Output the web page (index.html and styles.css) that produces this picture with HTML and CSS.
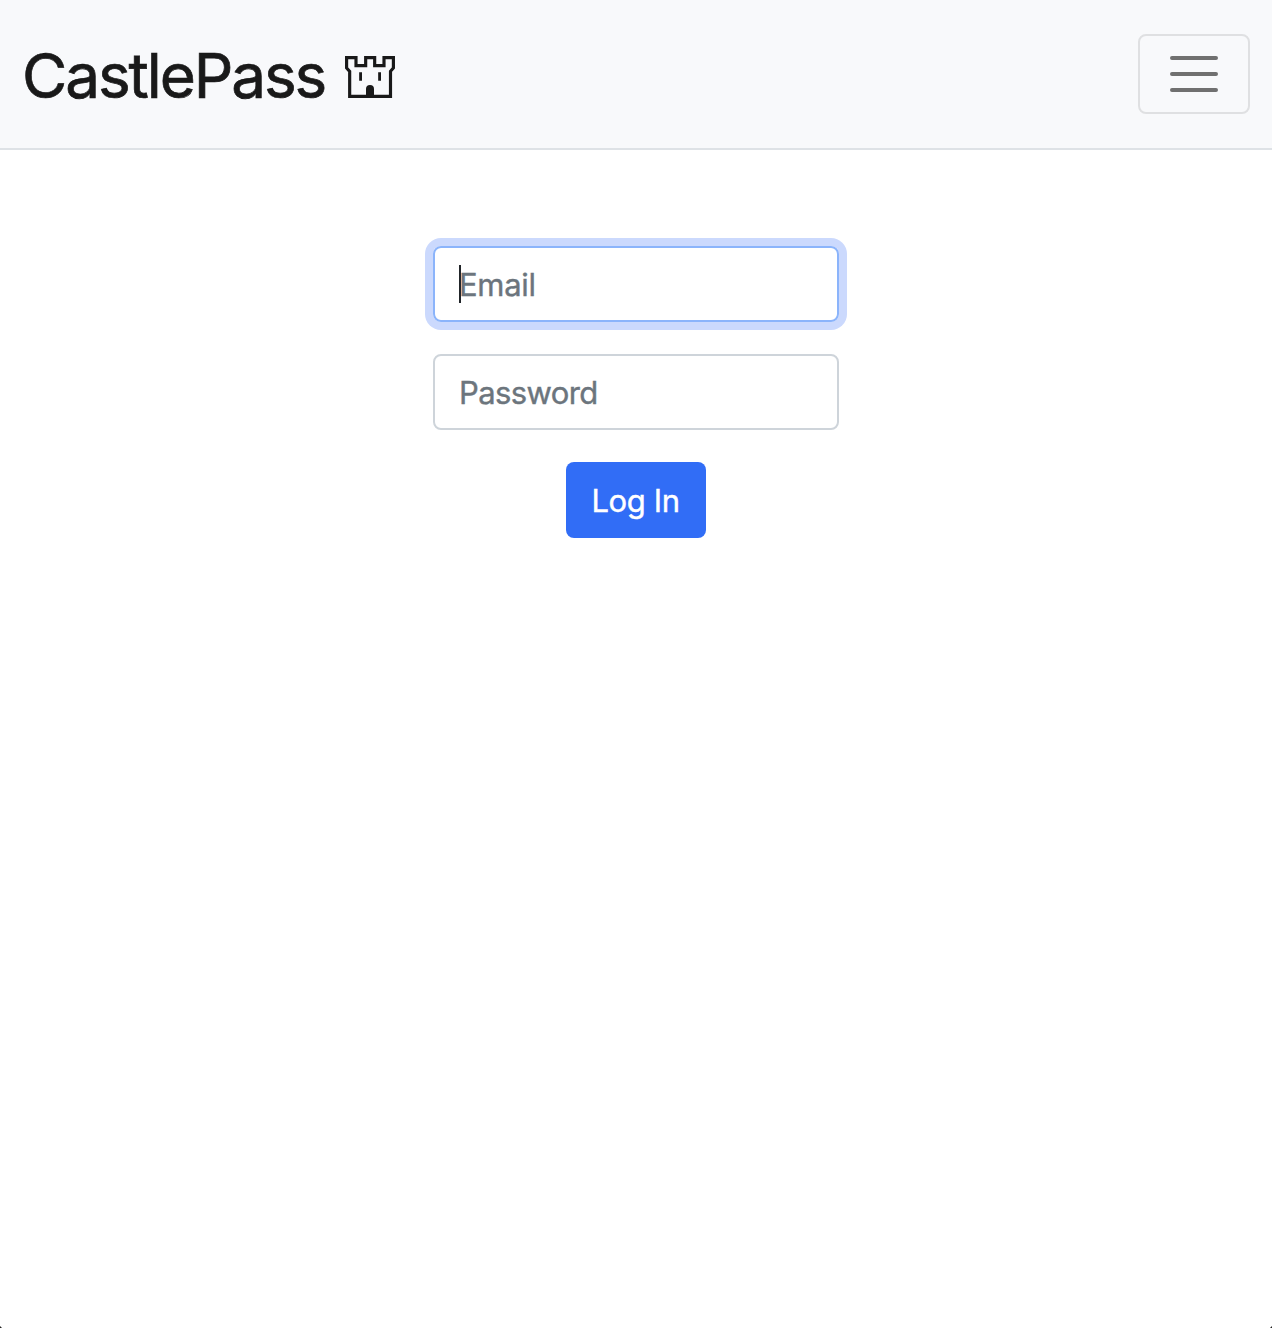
FILE: index.html
```html
<!DOCTYPE html>
<html lang="en">
<head>
<meta charset="utf-8">
<title>CastlePass</title>
<link rel="stylesheet" href="styles.css">
</head>
<body>
<nav class="navbar">
  <a class="brand">
    <span class="brand-name">CastlePass</span>
    <svg class="brand-icon" viewBox="30 33 150 126" aria-hidden="true">
      <path class="wall" d="M34.8 37.8H63V62H92V37.8H119V62H147V37.8H175.2V69L166.5 79V154.2H44V79L34.8 69Z"/>
      <path class="detail" d="M72.5 82h8.5v25h-8.5zM129.5 82h8.5v25h-8.5zM93 155V132a12 12 0 0 1 24 0V155z"/>
    </svg>
  </a>
  <button class="toggler" type="button" aria-label="Toggle navigation">
    <svg class="toggler-icon" viewBox="0 0 30 30" aria-hidden="true">
      <path d="M4 7h22M4 15h22M4 23h22"/>
    </svg>
  </button>
</nav>
<main class="content">
  <form class="login">
    <div class="field focused"><span class="caret"></span><span class="label">Email</span></div>
    <div class="field"><span class="label">Password</span></div>
    <button class="submit" type="button"><span class="submit-text">Log In</span></button>
  </form>
</main>
<span class="corner left"></span>
<span class="corner right"></span>
</body>
</html>
```
FILE: styles.css
```css
* { box-sizing: border-box; }
body {
  margin: 0;
  min-height: 1328px;
  position: relative;
  background: #fff;
  color: #212529;
  font-family: Inter, "Liberation Sans", sans-serif;
}
.navbar {
  display: flex;
  align-items: center;
  justify-content: space-between;
  height: 150px;
  padding: 0 22px 0 22px;
  background: #f8f9fb;
  border-bottom: 2px solid #dee2e6;
}
.brand { display: flex; align-items: center; color: #191919; }
.brand-name {
  width: 323px;
  padding-top: 3px;
  font-size: 62px;
  line-height: 96px;
  letter-spacing: -2.1px;
  -webkit-text-stroke: 0.7px currentColor;
  white-space: nowrap;
}
.brand-icon { width: 50px; height: 42px; margin-top: 5px; }
.wall { fill: none; stroke: #191919; stroke-width: 9.5; }
.detail { fill: #191919; }
.toggler {
  display: flex;
  align-items: center;
  justify-content: center;
  width: 112px;
  height: 80px;
  padding: 0;
  background: transparent;
  border: 2px solid #dfe0e2;
  border-radius: 8px;
}
.toggler-icon { width: 60px; height: 60px; }
.toggler-icon path {
  fill: none;
  stroke: #707070;
  stroke-width: 2;
  stroke-linecap: round;
}
.content { display: flex; justify-content: center; padding-top: 96px; }
.login {
  display: flex;
  flex-direction: column;
  align-items: center;
  gap: 32px;
  width: 406px;
}
.field {
  display: flex;
  align-items: center;
  width: 100%;
  height: 76px;
  padding-left: 24px;
  border: 2px solid #ced4da;
  border-radius: 8px;
  color: #6c757d;
  font-size: 31px;
}
.focused { border-color: #8bb4fb; box-shadow: 0 0 0 8px #cbd9fd; }
.caret { width: 2px; height: 38px; margin: -1px -2px 0 0; background: #212529; }
.label { letter-spacing: -0.6px; -webkit-text-stroke: 0.4px currentColor; }
.focused .label { letter-spacing: -0.3px; }
.submit {
  width: 140px;
  height: 76px;
  padding: 0 1px 0 0;
  border: 0;
  border-radius: 8px;
  background: #316df6;
  color: #fff;
  font: 31px Inter, "Liberation Sans", sans-serif;
}
.submit-text { letter-spacing: -0.4px; -webkit-text-stroke: 0.4px currentColor; }
.corner { position: absolute; bottom: 0; width: 2px; height: 2px; background: #222; }
.left { left: 0; clip-path: polygon(0 0, 100% 100%, 0 100%); }
.right { right: 0; clip-path: polygon(100% 0, 100% 100%, 0 100%); }
```
